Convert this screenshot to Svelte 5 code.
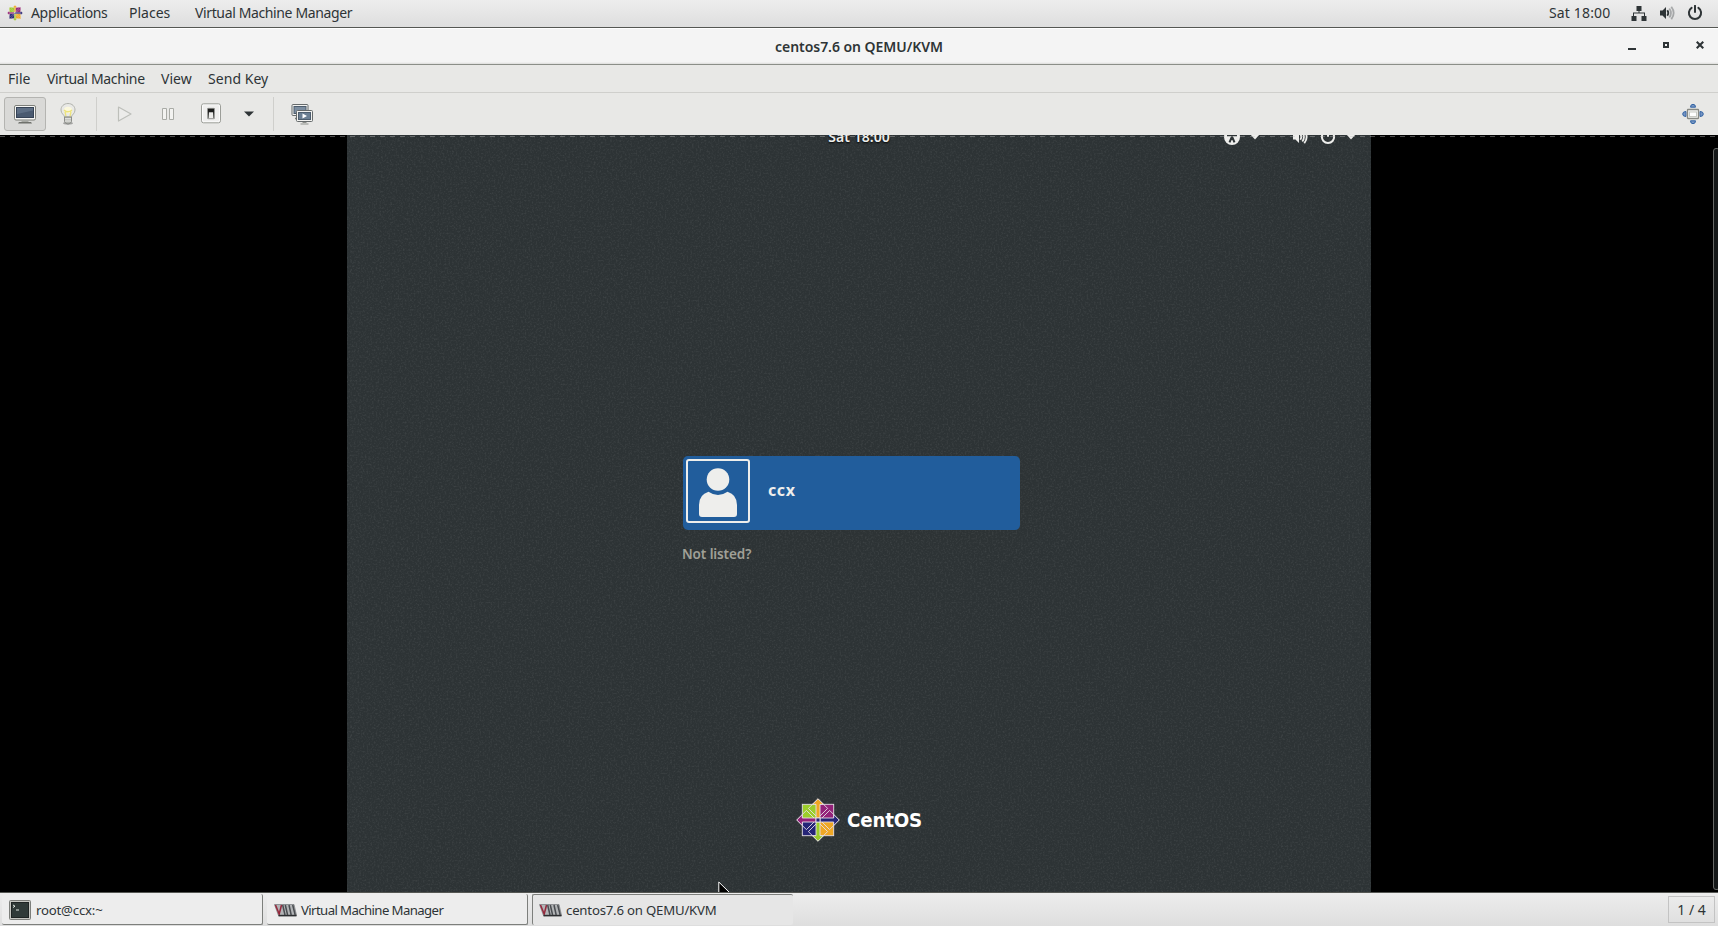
<script lang="ts">
  interface Task {
    title: string;
    icon: 'terminal' | 'vmm';
    tight?: boolean;
    active: boolean;
  }

  const panelMenus = [
    { label: 'Places', cls: 'places' },
    { label: 'Virtual Machine Manager', cls: 'vmm' }
  ];

  const menus = [
    { label: 'File', cls: 'file' },
    { label: 'Virtual Machine', cls: 'machine' },
    { label: 'View', cls: 'view' },
    { label: 'Send Key', cls: 'key' }
  ];

  const tasks: Task[] = [
    { title: 'root@ccx:~', icon: 'terminal', active: false },
    { title: 'Virtual Machine Manager', icon: 'vmm', tight: true, active: false },
    { title: 'centos7.6 on QEMU/KVM', icon: 'vmm', active: true }
  ];

  // the four quarters of the CentOS mark, clockwise from the top
  const quarters = [
    { angle: 0, arrow: '#efa724', square: '#932279' },
    { angle: 90, arrow: '#262577', square: '#efa724' },
    { angle: 180, arrow: '#9ccd2a', square: '#262577' },
    { angle: 270, arrow: '#932279', square: '#9ccd2a' }
  ];
</script>

{#snippet centosMark(size: number, stroke: string, width: number)}
  <svg width={size} height={size} viewBox="-22 -22 44 44">
    {#each quarters as q}
      <g transform="rotate({q.angle})" {stroke} stroke-width={width}>
        <rect x="1" y="-15.7" width="14.7" height="14.7" fill={q.square} />
      </g>
    {/each}
    {#each quarters as q}
      <g transform="rotate({q.angle})" {stroke} stroke-width={width}>
        <path d="M0 -2L-9.6 -11.6L0 -21.2L9.6 -11.6Z" fill="none" />
        <path d="M0 -21.2L5.5 -15.7H2V-2H-2V-15.7H-5.5Z" fill={q.arrow} />
      </g>
    {/each}
    <rect x="-2" y="-2" width="4" height="4" fill="#262577" {stroke} stroke-width={width} />
  </svg>
{/snippet}

{#snippet volume(color: string, faded: number)}
  <svg width="16" height="16" viewBox="0 0 16 16">
    <path d="M1 5.5H3.5L7 2V14L3.5 10.5H1Z" fill={color} />
    <g fill="none" stroke={color} stroke-width="1.8">
      <path d="M8.3 5.3Q10.3 8 8.3 10.7" />
      <path d="M10.3 3.5Q13.6 8 10.3 12.5" opacity={faded} />
      <path d="M12.3 1.8Q17 8 12.3 14.2" opacity={faded} />
    </g>
  </svg>
{/snippet}

{#snippet power(color: string)}
  <svg width="16" height="16" viewBox="0 0 16 16">
    <path d="M4.6 2.9A6.1 6.1 0 1 0 11.4 2.9" fill="none" stroke={color} stroke-width="2" stroke-linecap="round" />
    <path d="M8 0.8V7" stroke={color} stroke-width="2" stroke-linecap="round" />
  </svg>
{/snippet}

<div class="desktop">
  <header class="panel">
    <div class="apps">
      {@render centosMark(16, '#f0e6dc', 0.8)}
      <span>Applications</span>
    </div>
    {#each panelMenus as item}
      <div class="panel-item {item.cls}">{item.label}</div>
    {/each}
    <div class="tray">
      <span class="clock">Sat 18:00</span>
      <svg width="16" height="16" viewBox="0 0 16 16">
        <path d="M5.5 1H10.5V6H8.5V7.5H14V11H15.5V16H10.5V11H13V8.5H3V11H5.5V16H0.5V11H2V7.5H7.5V6H5.5Z" fill="#2e3436" />
      </svg>
      {@render volume('#2e3436', 0.35)}
      {@render power('#2e3436')}
    </div>
  </header>

  <div class="titlebar">
    <span class="title">centos7.6 on QEMU/KVM</span>
    <div class="controls">
      <svg width="8" height="10" viewBox="0 0 8 10"><path d="M0 8H8V10H0Z" fill="#2e3436" /></svg>
      <svg width="6" height="10" viewBox="0 0 6 10"><path d="M1 3H5V7H1Z" fill="none" stroke="#2e3436" stroke-width="2" /></svg>
      <svg width="8" height="10" viewBox="0 0 8 10"><path d="M0.7 1.7L7.3 8.3M7.3 1.7L0.7 8.3" stroke="#2e3436" stroke-width="2.2" /></svg>
    </div>
  </div>

  <nav class="menubar">
    {#each menus as menu}
      <span class={menu.cls}>{menu.label}</span>
    {/each}
  </nav>

  <div class="toolbar">
    <button class="tool pressed" aria-label="Console">
      <svg width="24" height="24" viewBox="0 0 24 24">
        <rect x="1.5" y="3.5" width="21" height="14.5" rx="1.5" fill="#f6f6f4" stroke="#7c7e79" />
        <rect x="3.5" y="5.5" width="17" height="10" fill="#4a5a70" stroke="#364356" />
        <path d="M4 6H20V8.5L4 12Z" fill="#7789a0" opacity="0.45" />
        <path d="M8.5 18.5H15.5V20H8.5Z" fill="#a5a7a2" />
        <path d="M6 20H18L19 21.5H5Z" fill="#6f716c" />
      </svg>
    </button>
    <button class="tool bulb" aria-label="Details">
      <svg width="24" height="24" viewBox="0 0 24 24">
        <ellipse cx="12" cy="21.3" rx="5" ry="1.4" fill="#777" opacity="0.6" />
        <path d="M12 1.5C7.9 1.5 5 4.3 5 8C5 11.6 8 12.5 8.6 15H15.4C16 12.5 19 11.6 19 8C19 4.3 16.1 1.5 12 1.5Z" fill="#e9e9e6" stroke="#b1b3ad" />
        <ellipse cx="12" cy="8" rx="4" ry="3.2" fill="#fbf8dc" />
        <path d="M10 14.5L9 9.5M14 14.5L15 9.5M8 8Q12 11.5 16 8" fill="none" stroke="#ece27c" stroke-width="1.3" />
        <path d="M8.5 15H15.5V19.5Q15 21.5 12 22Q9 21.5 8.5 19.5Z" fill="#b4b6b1" stroke="#8b8d88" />
        <path d="M9 16.8H15M9 19H15" stroke="#f0f0ed" />
      </svg>
    </button>
    <i class="separator first"></i>
    <button class="tool play" aria-label="Run">
      <svg width="16" height="18" viewBox="0 0 16 18"><path d="M1.5 2L14 9L1.5 16Z" fill="#ececea" stroke="#bdbfba" stroke-width="1.2" stroke-linejoin="round" /></svg>
    </button>
    <button class="tool pause" aria-label="Pause">
      <svg width="14" height="14" viewBox="0 0 14 14"><path d="M1.5 1.5H5.5V12.5H1.5ZM8.5 1.5H12.5V12.5H8.5Z" fill="#f3f3f1" stroke="#a9aba6" /></svg>
    </button>
    <button class="tool switch" aria-label="Shut down">
      <svg width="22" height="22" viewBox="0 0 22 22">
        <defs>
          <linearGradient id="well" x2="0" y2="1">
            <stop offset="0.3" stop-color="#1c1d1c" />
            <stop offset="1" stop-color="#8e908c" />
          </linearGradient>
        </defs>
        <rect x="1.5" y="0.8" width="19" height="19" rx="2" fill="#fbfbfb" stroke="#9c9e99" />
        <rect x="3" y="2.3" width="16" height="16" rx="1" fill="#efefee" />
        <rect x="7.5" y="5.3" width="7" height="10.5" rx="0.5" fill="url(#well)" stroke="#9a9b98" stroke-width="0.7" />
        <rect x="9" y="9.3" width="4" height="5.8" fill="#ececea" />
      </svg>
    </button>
    <button class="tool dropdown" aria-label="Shut down options">
      <svg width="10" height="6" viewBox="0 0 10 6"><path d="M0 0.5H10L5 5.5Z" fill="#2e3436" /></svg>
    </button>
    <i class="separator second"></i>
    <button class="tool snapshots" aria-label="Snapshots">
      <svg width="22" height="22" viewBox="0 0 22 22">
        <rect x="1" y="1.5" width="16" height="11" rx="1" fill="#f2f2f0" stroke="#656a6b" />
        <rect x="3" y="3.5" width="12" height="7" fill="#7b8da0" stroke="#4d5d6d" />
        <path d="M4 15.5H7" stroke="#777a76" stroke-width="1.5" />
        <rect x="5.5" y="7.5" width="16" height="11" rx="1" fill="#f2f2f0" stroke="#656a6b" />
        <rect x="7.5" y="9.5" width="12" height="7" fill="#6b7f93" stroke="#4d5d6d" />
        <path d="M11.5 10.5L16 13L11.5 15.5Z" fill="#fff" />
        <path d="M11.5 19.5H15.5M9.5 21H17.5" stroke="#8e918c" />
      </svg>
    </button>
    <button class="tool fullscreen" aria-label="Fullscreen">
      <svg width="22" height="22" viewBox="0 0 22 22">
        <g fill="#7896c4" stroke="#3465a4">
          <path d="M8.5 4.2Q8.5 1.3 11 1.3T13.5 4.2Z" />
          <path d="M8.5 17.8Q8.5 20.7 11 20.7T13.5 17.8Z" />
          <path d="M4 8.5Q0.7 8.5 0.7 11T4 13.5Z" />
          <path d="M18 8.5Q21.3 8.5 21.3 11T18 13.5Z" />
        </g>
        <rect x="5.5" y="6.5" width="11" height="9" rx="0.5" fill="#f5f5f3" stroke="#888a85" stroke-width="1.3" />
        <rect x="7.5" y="9" width="7" height="4.5" fill="#fff" stroke="#c8cac4" />
      </svg>
    </button>
  </div>

  <main class="viewer">
    <section class="guest">
      <svg class="grain" width="1024" height="768" aria-hidden="true">
        <filter id="grain">
          <feTurbulence type="fractalNoise" baseFrequency="0.55" numOctaves="2" seed="4" />
          <feColorMatrix type="matrix" values="0 0 0 0 1  0 0 0 0 1  0 0 0 0 1  0.9 0 0 0 -0.41" />
        </filter>
        <rect width="1024" height="768" filter="url(#grain)" opacity="0.2" />
      </svg>
      <div class="guest-bar">
        <span class="guest-clock">Sat 18:00</span>
        <div class="guest-tray">
          <svg class="access" width="16" height="16" viewBox="0 0 16 16">
            <circle cx="8" cy="8" r="8" fill="#eeeeec" />
            <circle cx="8" cy="3.5" r="1.6" fill="#2e3436" />
            <path d="M3 6.2H13M8 6V9.5M7.6 8.5L5.5 13.4M8.4 8.5L10.5 13.4" fill="none" stroke="#2e3436" stroke-width="2" />
          </svg>
          <svg class="arrow" width="10" height="6" viewBox="0 0 10 6"><path d="M0 0H10L5 5.5Z" fill="#eeeeec" /></svg>
          {@render volume('#eeeeec', 1)}
          {@render power('#eeeeec')}
          <svg class="arrow last" width="10" height="6" viewBox="0 0 10 6"><path d="M0 0H10L5 5.5Z" fill="#eeeeec" /></svg>
        </div>
      </div>
      <div class="login">
        <div class="user">
          <div class="avatar">
            <svg width="60" height="60" viewBox="0 0 60 60">
              <circle cx="30" cy="18.5" r="11.3" fill="#eeeeec" />
              <path d="M20.5 30.7Q30 37.3 39.5 30.7Q49 33.5 49 44V53Q49 56 46 56H14Q11 56 11 53V44Q11 33.5 20.5 30.7Z" fill="#eeeeec" />
            </svg>
          </div>
          <span class="user-name">ccx</span>
        </div>
        <span class="not-listed">Not listed?</span>
      </div>
      <div class="brand">
        {@render centosMark(44, '#e6dfe6', 0.9)}
        <svg width="78" height="24" viewBox="0 0 78 24">
          <text x="0" y="19" textLength="75" lengthAdjust="spacingAndGlyphs">CentOS</text>
        </svg>
      </div>
      <svg class="cursor" width="14" height="20" viewBox="0 0 14 20">
        <path d="M0.8 1V18L5 13.8L7.5 19H10L8 12.5H12.5Z" fill="#000" stroke="#fff" stroke-width="1" />
      </svg>
    </section>
    <div class="edge"></div>
    <div class="scrollbar"></div>
  </main>

  <footer class="taskbar">
    {#each tasks as task}
      <button class="task" class:active={task.active}>
        {#if task.icon === 'terminal'}
          <svg width="22" height="20" viewBox="0 0 22 20">
            <rect x="0.5" y="0.5" width="21" height="19" rx="1" fill="#c5c7c2" stroke="#7c7e7a" />
            <rect x="2.5" y="2.5" width="17" height="15" fill="#2f3a38" stroke="#1e2423" />
            <path d="M4 5L6 6.2L4 7.5M7 10H10" fill="none" stroke="#dfe6df" />
          </svg>
        {:else}
          <svg width="23" height="14" viewBox="0 0 23 14">
            <path d="M0.5 1.5H20L22.5 12.5H4.5Z" fill="#b2b4b6" stroke="#808285" stroke-width="0.8" />
            <path d="M1.5 2L5.2 11L7.5 2" fill="none" stroke="#96283c" stroke-width="1.5" />
            <path d="M8.7 2L11 12M11.3 2L13.6 12M15 2L17.2 12M18.7 2L21.2 12" stroke="#4a4d51" stroke-width="1.5" />
            <path d="M4.5 12.6H22.5" stroke="#2c2e30" stroke-width="1.6" />
          </svg>
        {/if}
        <span class="task-title" class:tight={task.tight}>{task.title}</span>
      </button>
    {/each}
    <div class="workspace">1 / 4</div>
  </footer>
</div>

<style>
  :global(body) {
    margin: 0;
    background: #000;
  }

  .desktop {
    display: flex;
    flex-direction: column;
    width: 1718px;
    height: 926px;
    overflow: hidden;
    font-family: 'Noto Sans', 'Open Sans', sans-serif;
    font-size: 14px;
    color: #2e3436;
    letter-spacing: -0.2px;
    white-space: nowrap;
  }

  .desktop svg {
    display: block;
    flex: none;
  }

  button {
    margin: 0;
    padding: 0;
    border: none;
    background: none;
    font: inherit;
    letter-spacing: inherit;
    color: inherit;
  }

  .panel {
    display: flex;
    align-items: center;
    box-sizing: border-box;
    height: 28px;
    padding: 0 15px 2px 7px;
    background: linear-gradient(#ededed, #dedede);
    border-bottom: 1px solid #555753;
  }

  .apps {
    display: flex;
    align-items: center;
    gap: 8px;
    width: 122px;
    letter-spacing: -0.33px;
  }

  .places {
    width: 66px;
    letter-spacing: 0;
  }

  .vmm {
    letter-spacing: -0.37px;
  }

  .tray {
    display: flex;
    align-items: center;
    gap: 12px;
    margin-left: auto;
  }

  .clock {
    width: 70px;
    letter-spacing: 0.15px;
  }

  .titlebar {
    display: grid;
    grid-template-columns: 1fr auto 1fr;
    align-items: center;
    box-sizing: border-box;
    height: 37px;
    padding: 0 14px 2px;
    background: linear-gradient(#fff 0 1px, #f4f4f4 1px 34px, #dcdcda);
    border-bottom: 1px solid #8b8e88;
  }

  .title {
    grid-column: 2;
    padding-top: 2px;
    font-weight: 600;
    font-size: 14px;
    letter-spacing: -0.05px;
  }

  .controls {
    display: flex;
    justify-content: flex-end;
    gap: 27px;
  }

  .menubar {
    display: flex;
    align-items: center;
    box-sizing: border-box;
    height: 28px;
    padding-left: 8px;
    background: #e8e8e6;
    border-bottom: 1px solid #cfcfcc;
  }

  .file {
    width: 39px;
    letter-spacing: 0;
  }

  .machine {
    width: 114px;
    letter-spacing: -0.33px;
  }

  .view {
    width: 47px;
    letter-spacing: 0;
  }

  .key {
    letter-spacing: 0.05px;
  }

  .toolbar {
    display: flex;
    align-items: center;
    box-sizing: border-box;
    height: 42px;
    padding: 0 14px 0 4px;
    background: #e8e8e6;
  }

  .tool {
    display: flex;
    align-items: center;
    justify-content: center;
    box-sizing: border-box;
    width: 42px;
    height: 34px;
  }

  .pressed {
    background: #d9d9d7;
    border: 1px solid #b4b4b1;
    border-radius: 3px;
  }

  .bulb {
    padding-left: 1px;
  }

  .separator {
    width: 1px;
    height: 34px;
    background: #cfcfcc;
  }

  .first {
    margin-left: 8px;
  }

  .play {
    margin-left: 7px;
  }

  .pause {
    margin-left: 1px;
  }

  .switch {
    margin-left: 1px;
  }

  .dropdown {
    width: 34px;
  }

  .second {
    margin-left: 7px;
  }

  .snapshots {
    margin-left: 7px;
  }

  .fullscreen {
    width: 22px;
    margin-left: auto;
  }

  .viewer {
    position: relative;
    display: flex;
    justify-content: center;
    height: 757px;
    overflow: hidden;
    background: #000;
  }

  .guest {
    position: relative;
    display: flex;
    flex: none;
    flex-direction: column;
    width: 1024px;
    height: 768px;
    margin-top: -11px;
    background: #2d3335;
    color: #eeeeec;
  }

  .grain {
    position: absolute;
    top: 0;
    left: 0;
  }

  .guest-bar {
    position: relative;
    display: grid;
    grid-template-columns: 1fr auto 1fr;
    align-items: center;
    height: 26px;
    font-weight: 600;
    text-shadow: 0 1px 2px #000;
  }

  .guest-clock {
    grid-column: 2;
    padding-bottom: 2px;
    letter-spacing: 0.05px;
  }

  .guest-tray {
    display: flex;
    align-items: center;
    justify-content: flex-end;
    gap: 12px;
    padding-right: 15px;
  }

  .access {
    margin-right: -2px;
  }

  .access + .arrow {
    margin-right: 20px;
  }

  .guest-tray > .last {
    margin-left: -2px;
  }

  .login {
    position: relative;
    display: flex;
    flex-direction: column;
    gap: 14px;
    margin: 306px 0 0 336px;
    font-weight: 600;
  }

  .user {
    display: flex;
    align-items: center;
    gap: 18px;
    box-sizing: border-box;
    width: 337px;
    height: 74px;
    padding: 0 3px 4px;
    background: #215d9c;
    border-radius: 5px;
  }

  .avatar {
    width: 60px;
    height: 60px;
    border: 2px solid #eeeeec;
    border-radius: 3px;
  }

  .user-name {
    padding-bottom: 2px;
    font-size: 16px;
    font-weight: 700;
    letter-spacing: 0.6px;
  }

  .not-listed {
    height: 20px;
    margin-left: -1px;
    font-size: 13.5px;
    line-height: 20px;
    letter-spacing: -0.1px;
    color: #a0a097;
  }

  .brand {
    position: relative;
    display: flex;
    align-items: center;
    gap: 7px;
    margin: 234px 0 0 449px;
  }

  .brand text {
    font-family: 'DejaVu Sans', sans-serif;
    font-size: 20px;
    font-weight: 700;
    fill: #fff;
  }

  .cursor {
    position: absolute;
    left: 371px;
    top: 757px;
  }

  .edge {
    position: absolute;
    top: 1px;
    left: 0;
    right: 0;
    height: 1px;
    background: repeating-linear-gradient(90deg, rgba(190, 190, 190, 0.4) 0 5px, transparent 5px 10px);
  }

  .scrollbar {
    position: absolute;
    top: 13px;
    right: -2px;
    box-sizing: border-box;
    width: 7px;
    height: 742px;
    background: #141718;
    border: 1px solid #666866;
    border-radius: 3px;
  }

  .taskbar {
    display: flex;
    align-items: flex-start;
    box-sizing: border-box;
    height: 34px;
    padding: 1px 3px 0 2px;
    gap: 4px;
    background: linear-gradient(#ededed, #dedede);
    border-top: 1px solid #555753;
  }

  .task {
    display: flex;
    align-items: center;
    gap: 5px;
    box-sizing: border-box;
    width: 261px;
    height: 31px;
    padding: 2px 6px 0 7px;
    background: #ededed;
    border-right: 1px solid #7d7f7c;
    border-bottom: 1px solid #7d7f7c;
    border-radius: 2px;
  }

  .task.active {
    padding: 0 6px 0 6px;
    background: #e6e6e6;
    border: none;
    border-top: 1px solid #7d7f7c;
    border-left: 1px solid #7d7f7c;
  }

  .task-title {
    font-size: 13.2px;
  }

  .tight {
    margin-left: -1px;
    letter-spacing: -0.6px;
  }

  .active .task-title {
    margin-left: -1px;
  }

  .workspace {
    box-sizing: border-box;
    width: 47px;
    height: 27px;
    margin: 2px 0 0 auto;
    border: 1px solid #c3c3c3;
    line-height: 25px;
    text-align: center;
    letter-spacing: 0;
  }
</style>
